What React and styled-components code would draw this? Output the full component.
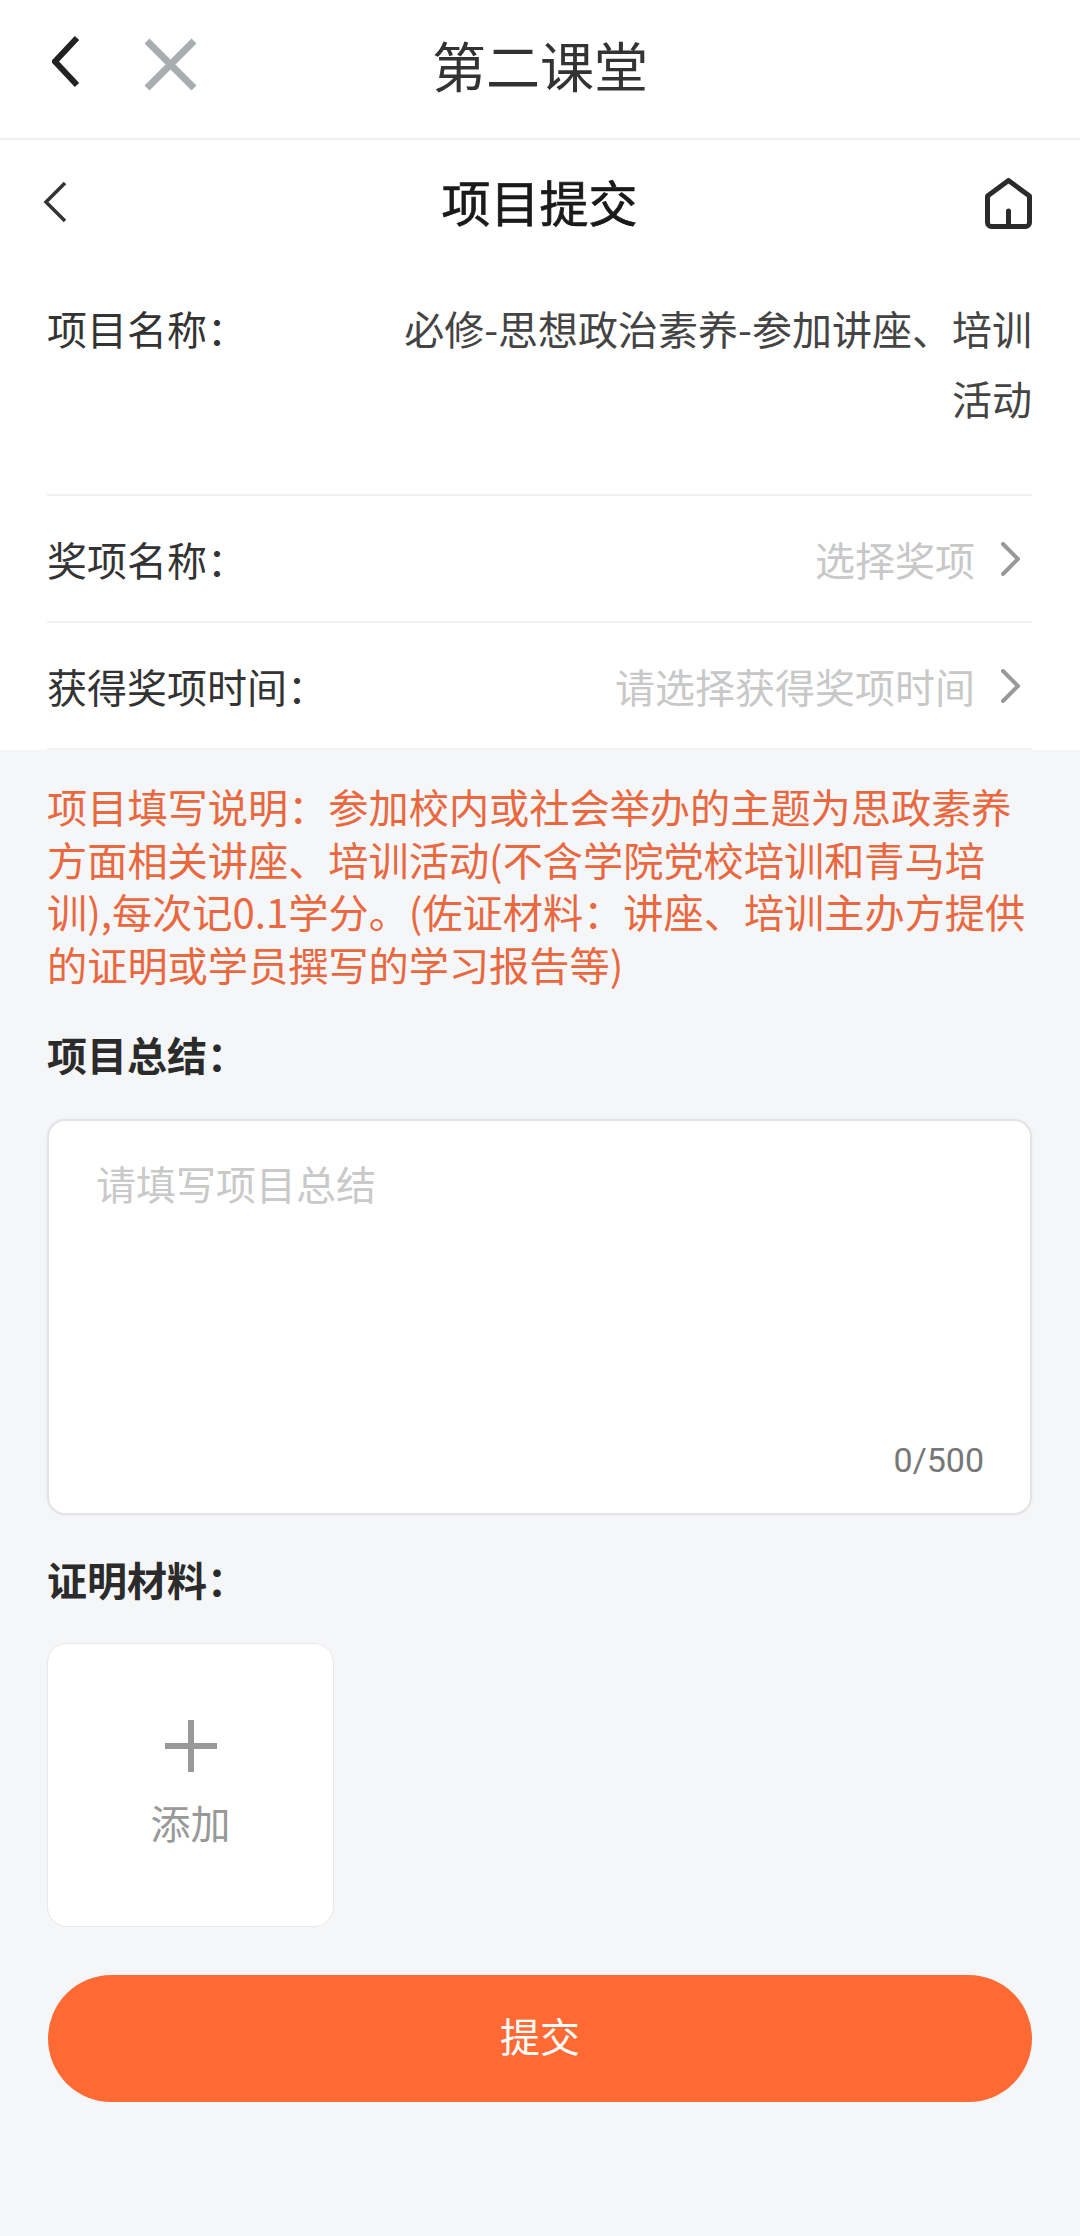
import React from 'react'
import styled, { createGlobalStyle } from 'styled-components'

const FONT = `"Noto Sans CJK SC", "Noto Sans", sans-serif`

const GlobalStyle = createGlobalStyle`
  html, body {
    margin: 0;
    padding: 0;
    background: #f5f6f8;
    font-family: ${FONT};
  }
  * { box-sizing: border-box; }
`

const Page = styled.div`
  width: 1080px;
  height: 2236px;
  overflow: hidden;
  background: #f5f6f8;
`

const TopBar = styled.header`
  height: 140px;
  background: #fff;
  border-bottom: 2px solid #eeeeee;
  position: relative;
  display: flex;
  align-items: center;
  justify-content: center;
  padding-bottom: 8px;
`

const TopTitle = styled.h1`
  margin: 0;
  font-size: 54px;
  font-weight: 400;
  color: #333;
  line-height: 1;
`

const TopIcons = styled.div`
  position: absolute;
  left: 52px;
  top: 35px;
  display: flex;
  gap: 64px;
  align-items: flex-start;
`

const CloseIcon = styled.svg`
  margin-top: 3px;
`

const Form = styled.section`
  background: #fff;
  padding: 0 48px 0 47px;
  height: 610px;
`

const SubHeader = styled.div`
  height: 126px;
  padding-bottom: 6px;
  display: flex;
  align-items: center;
  justify-content: center;
  position: relative;
`

const SubTitle = styled.h2`
  margin: 0;
  font-size: 49px;
  font-weight: 400;
  -webkit-text-stroke: 0.7px #1a1a1a;
  color: #1a1a1a;
  line-height: 1;
`

const BackIcon = styled.svg`
  position: absolute;
  left: -4px;
  top: 41px;
`

const HomeIcon = styled.svg`
  position: absolute;
  right: 0;
  top: 38px;
`

const Row = styled.div`
  display: flex;
  justify-content: space-between;
  align-items: ${p => (p.$top ? 'flex-start' : 'center')};
  height: ${p => p.$h}px;
  border-bottom: 2px solid #f1f1f1;
  padding-top: ${p => p.$pt || 0}px;
`

const Label = styled.span`
  font-size: 40px;
  color: #333;
  line-height: 70px;
  flex-shrink: 0;
`

const Value = styled.div`
  width: 640px;
  text-align: right;
  font-size: 40px;
  line-height: 70px;
  color: #444;
`

const Picker = styled.div`
  display: flex;
  align-items: center;
  gap: 26px;
  margin-right: 12px;
  font-size: 40px;
  color: #c8c8c8;
`

const Body = styled.div`
  padding: 30px 48px 0 47px;
`

const Notice = styled.p`
  margin: 0;
  font-size: 40.2px;
  line-height: 52.5px;
  color: #e9683f;
`

const SectionTitle = styled.h3`
  margin: ${p => p.$mt}px 0 0;
  font-size: 40px;
  font-weight: 700;
  color: #2b2b2b;
  line-height: 54px;
`

const TextBox = styled.div`
  margin-top: 38px;
  height: 396px;
  background: #fff;
  border: 2px solid #e3e3e5;
  border-radius: 18px;
  box-shadow: 0 0 4px rgba(0, 0, 0, 0.04);
  padding: 37px 47px;
  position: relative;
`

const Placeholder = styled.div`
  font-size: 40px;
  line-height: 50px;
  color: #c9c9c9;
`

const Counter = styled.span`
  position: absolute;
  right: 46px;
  bottom: 33px;
  font-size: 34px;
  line-height: 40px;
  color: #777;
  font-family: "Roboto", sans-serif;
`

const AddTile = styled.div`
  margin-top: 37px;
  width: 287px;
  height: 284px;
  background: #fff;
  border: 1px solid #e8e8ea;
  border-radius: 20px;
  display: flex;
  flex-direction: column;
  align-items: center;
  padding-top: 76px;
`

const AddText = styled.span`
  margin-top: 24px;
  font-size: 40px;
  line-height: 52px;
  color: #999;
`

const SubmitButton = styled.button`
  display: block;
  width: 984px;
  height: 127px;
  margin: 48px 0 0 1px;
  padding: 0 0 8px;
  border: 0;
  border-radius: 64px;
  background: #ff6933;
  color: #fff;
  font-family: ${FONT};
  font-size: 40px;
`

const Chevron = ({ w, h, color, sw, flip, cap = 'butt' }) => (
  <svg width={w} height={h} viewBox={`0 0 ${w} ${h}`} fill="none">
    <path
      d={flip
        ? `M${sw / 2} ${sw / 2}L${w - sw / 2} ${h / 2}L${sw / 2} ${h - sw / 2}`
        : `M${w - sw / 2} ${sw / 2}L${sw / 2} ${h / 2}L${w - sw / 2} ${h - sw / 2}`}
      stroke={color}
      strokeWidth={sw}
      strokeLinecap={cap}
    />
  </svg>
)

export default function App() {
  return (
    <Page>
      <GlobalStyle />
      <TopBar>
        <TopIcons>
          <Chevron w={28} h={53} color="#222" sw={6} />
          <CloseIcon width="53" height="53" viewBox="0 0 53 53" fill="none">
            <path d="M3 3L50 50M50 3L3 50" stroke="#a8adb0" strokeWidth="7" />
          </CloseIcon>
        </TopIcons>
        <TopTitle>第二课堂</TopTitle>
      </TopBar>
      <Form>
        <SubHeader>
          <BackIcon width="24" height="42" viewBox="0 0 24 42" fill="none">
            <path d="M22 2L3 21L22 40" stroke="#333" strokeWidth="3.5" />
          </BackIcon>
          <SubTitle>项目提交</SubTitle>
          <HomeIcon width="47" height="51" viewBox="0 0 47 51" fill="none">
            <path
              d="M23.5 2.5L44.5 18V44.5a4 4 0 0 1-4 4H6.5a4 4 0 0 1-4-4V18Z"
              stroke="#2b2b2b"
              strokeWidth="5"
              strokeLinejoin="round"
            />
            <path d="M23.5 33V48" stroke="#2b2b2b" strokeWidth="5" strokeLinecap="round" />
          </HomeIcon>
        </SubHeader>
        <Row $top $h={230} $pt={27}>
          <Label>项目名称：</Label>
          <Value>必修-思想政治素养-参加讲座、培训活动</Value>
        </Row>
        <Row $h={127}>
          <Label>奖项名称：</Label>
          <Picker>
            选择奖项
            <Chevron w={19} h={34} color="#999" sw={4} flip cap="round" />
          </Picker>
        </Row>
        <Row $h={127}>
          <Label>获得奖项时间：</Label>
          <Picker>
            请选择获得奖项时间
            <Chevron w={19} h={34} color="#999" sw={4} flip cap="round" />
          </Picker>
        </Row>
      </Form>
      <Body>
        <Notice>
          项目填写说明：参加校内或社会举办的主题为思政素养方面相关讲座、培训活动(不含学院党校培训和青马培训),每次记0.1学分。(佐证材料：讲座、培训主办方提供的证明或学员撰写的学习报告等)
        </Notice>
        <SectionTitle $mt={37}>项目总结：</SectionTitle>
        <TextBox>
          <Placeholder>请填写项目总结</Placeholder>
          <Counter>0/500</Counter>
        </TextBox>
        <SectionTitle $mt={37}>证明材料：</SectionTitle>
        <AddTile>
          <svg width="52" height="52" viewBox="0 0 52 52">
            <path d="M26 0V52M0 26H52" stroke="#999" strokeWidth="6" />
          </svg>
          <AddText>添加</AddText>
        </AddTile>
        <SubmitButton>提交</SubmitButton>
      </Body>
    </Page>
  )
}
